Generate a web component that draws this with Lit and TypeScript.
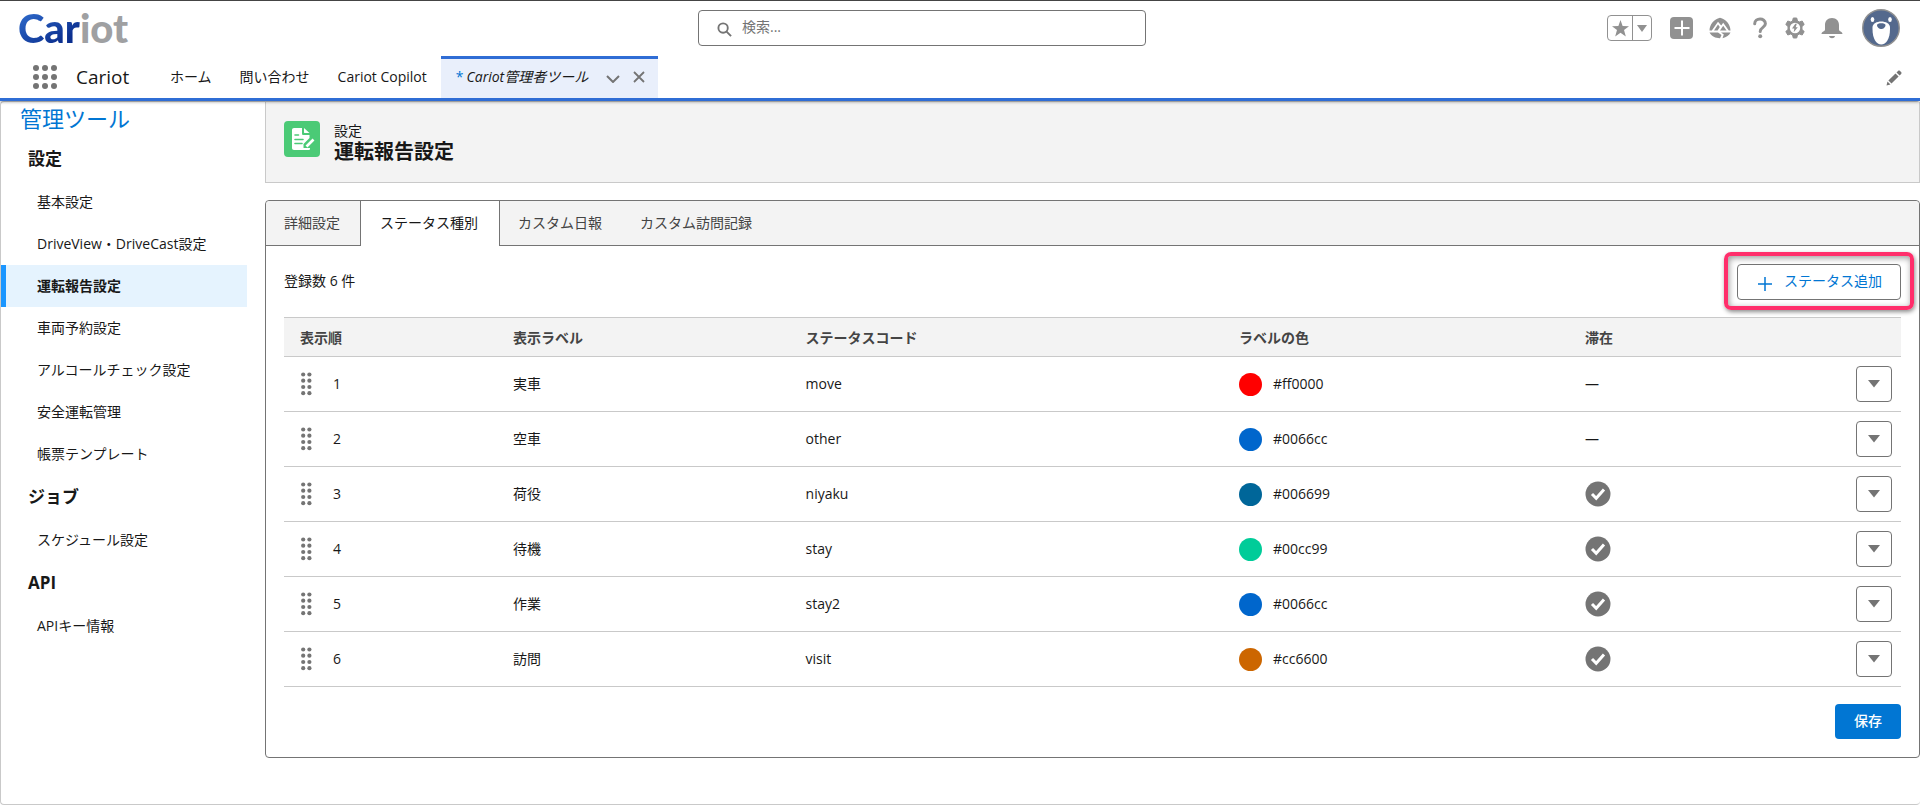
import { LitElement, html, css, svg } from "lit";
import { customElement, state } from "lit/decorators.js";

interface StatusType {
  label: string;
  code: string;
  color: string;
  stay: boolean;
}

interface MenuGroup {
  title: string;
  items: string[];
}

const STATUSES: StatusType[] = [
  { label: "実車", code: "move", color: "#ff0000", stay: false },
  { label: "空車", code: "other", color: "#0066cc", stay: false },
  { label: "荷役", code: "niyaku", color: "#006699", stay: true },
  { label: "待機", code: "stay", color: "#00cc99", stay: true },
  { label: "作業", code: "stay2", color: "#0066cc", stay: true },
  { label: "訪問", code: "visit", color: "#cc6600", stay: true },
];

const MENU: MenuGroup[] = [
  {
    title: "設定",
    items: [
      "基本設定",
      "DriveView・DriveCast設定",
      "運転報告設定",
      "車両予約設定",
      "アルコールチェック設定",
      "安全運転管理",
      "帳票テンプレート",
    ],
  },
  { title: "ジョブ", items: ["スケジュール設定"] },
  { title: "API", items: ["APIキー情報"] },
];

const TABS = ["詳細設定", "ステータス種別", "カスタム日報", "カスタム訪問記録"];

const base = css`
  * {
    box-sizing: border-box;
  }
  button {
    font: inherit;
    color: inherit;
    background: none;
    border: 0;
    padding: 0;
    cursor: pointer;
  }
  a {
    color: inherit;
    text-decoration: none;
  }
  svg {
    display: block;
    flex: none;
  }
`;

@customElement("global-header")
class GlobalHeader extends LitElement {
  static styles = [
    base,
    css`
      :host {
        display: block;
        position: relative;
        box-shadow: 0 1px 3px rgba(0, 0, 0, 0.35);
      }
      .bar {
        display: grid;
        grid-template-columns: minmax(0, 680fr) 448px minmax(0, 754fr);
        align-items: center;
        height: 55px;
        padding: 0 20px 0 18px;
        border-top: 1px solid #444;
      }
      .logo {
        display: flex;
        font: 900 40px/48px "Lato", sans-serif;
        color: #12409f;
      }
      .logo .light {
        color: #9fa0a2;
      }
      .logo .deep {
        background: linear-gradient(150deg, #2a63c4 20%, #0b2f8f 75%);
        background-clip: text;
        -webkit-background-clip: text;
        color: transparent;
      }
      .search {
        display: flex;
        align-items: center;
        gap: 10px;
        height: 36px;
        padding: 0 18px;
        border: 1px solid #747474;
        border-radius: 4px;
      }
      .search svg {
        margin-top: 3px;
      }
      .search input {
        flex: 1;
        min-width: 0;
        border: 0;
        outline: 0;
        padding: 0 0 2px;
        background: none;
        font: inherit;
        color: #444;
      }
      .search input::placeholder {
        color: #747474;
        opacity: 1;
      }
      .tools {
        display: flex;
        justify-content: flex-end;
        align-items: center;
      }
      .tools button {
        display: flex;
      }
      .fav {
        display: flex;
        height: 26px;
        border: 1px solid #919191;
        border-radius: 4px;
        margin-right: 18px;
      }
      .fav button {
        align-items: center;
        justify-content: center;
        width: 18px;
      }
      .fav .star {
        width: 25px;
        border-right: 1px solid #919191;
      }
      .icons {
        display: flex;
        align-items: center;
        gap: 16px;
        margin-right: 19px;
      }
      .icons .help {
        margin: 0 2px 0 6px;
      }
      .nav {
        display: flex;
        align-items: stretch;
        height: 46px;
        padding-right: 18px;
        border-bottom: 3px solid #2f6dd5;
      }
      .launcher {
        display: flex;
        align-items: center;
        padding: 0 19px 0 33px;
      }
      .app {
        align-self: center;
        width: 94px;
        font-size: 19px;
      }
      .links {
        display: flex;
        align-items: center;
        gap: 28px;
        margin-right: 14px;
      }
      .current {
        display: flex;
        align-items: center;
        gap: 3px;
        margin-top: 1px;
        padding: 0 13px 3px 15px;
        background: #e9effb;
        border-top: 3px solid #2f6dd5;
      }
      .current a {
        font-style: italic;
      }
      .mark {
        color: #0176d3;
      }
      .caret {
        margin: 4px 10px 0 15px;
      }
      .edit {
        margin: 2px 0 0 auto;
      }
    `,
  ];

  render() {
    return html`
      <header>
        <div class="bar">
          <div class="logo"><span class="deep">Car</span><span class="light">iot</span></div>
          <label class="search">
            <svg width="15" height="15" viewBox="0 0 16 16" fill="none" stroke="#747474" stroke-width="2">
              <circle cx="6.5" cy="6.5" r="5" />
              <path d="M10.2 10.2L15 15" />
            </svg>
            <input type="search" placeholder="検索..." aria-label="検索" />
          </label>
          <div class="tools">
            <div class="fav">
              <button class="star" aria-label="お気に入り">
                <svg width="17" height="17" viewBox="0 0 16 16" fill="#919191">
                  <path d="M8 0L10 5.6L16 5.8L11.3 9.5L13 15.6L8 12L3 15.6L4.7 9.5L0 5.8L6 5.6Z" />
                </svg>
              </button>
              <button aria-label="お気に入りリスト">
                <svg width="10" height="7" viewBox="0 0 10 7" fill="#919191"><path d="M0 0H10L5 7Z" /></svg>
              </button>
            </div>
            <div class="icons">
              <button aria-label="作成">
                <svg width="23" height="22" viewBox="0 0 23 22">
                  <rect width="23" height="22" rx="4" fill="#919191" />
                  <path d="M12 3.5V18.5M4.5 11H19.5" stroke="#fff" stroke-width="2" />
                </svg>
              </button>
              <button aria-label="ガイダンスセンター">
                <svg width="22" height="22" viewBox="0 0 22 22" fill="#919191">
                  <path d="M0.5 13.5C0.8 7 5 2.5 11 0.8C17 2.5 21.2 7 21.5 13.5H19.8L14.2 5.8L12.2 8.5L9 4.8L2.8 13.5Z" />
                  <path d="M5 13.5L9 7.5L10.8 10L8.6 13.5ZM11 13.5L14.2 8.7L17.5 13.5Z" />
                  <path d="M0.5 15.5H9L12.5 18L11 21.2C7 21.3 2.5 19.5 0.5 15.5ZM12 15.5H21.5C20.2 18.3 17.5 20.3 13.5 21.2L14.8 17.5Z" />
                </svg>
              </button>
              <button class="help" aria-label="ヘルプ">
                <svg width="14" height="22" viewBox="5.3 0 14 22">
                  <path d="M7 6.8C7 0.6 17.7 0.5 17.7 6.8C17.7 10.5 12.5 10.3 12.5 14.5" fill="none" stroke="#919191" stroke-width="3" stroke-linecap="round" />
                  <circle cx="12.5" cy="19.3" r="2" fill="#919191" />
                </svg>
              </button>
              <button aria-label="設定">
                <svg width="20" height="22" viewBox="0 0 20 22">
                  <path d="M8.3 1H11.7L12.5 4L14.3 5L17.2 4L19.2 7.5L17 9.5V12.5L19.2 14.5L17.2 18L14.3 17L12.5 18L11.7 21H8.3L7.5 18L5.7 17L2.8 18L0.8 14.5L3 12.5V9.5L0.8 7.5L2.8 4L5.7 5L7.5 4Z" fill="#919191" stroke="#919191" stroke-linejoin="round" />
                  <circle cx="10" cy="11" r="5.2" fill="#fff" />
                  <path d="M10.3 6.8L7 11.5H9.3L8.7 15.2L12.8 10.2H10.7L11.8 6.8Z" fill="#919191" />
                </svg>
              </button>
              <button aria-label="通知">
                <svg width="22" height="22" viewBox="0 0 22 22" fill="#919191">
                  <path d="M11 1C15.5 1 18 4 18 8V12.5C18 14.5 21.5 14.5 21.5 17H0.5C0.5 14.5 4 14.5 4 12.5V8C4 4 6.5 1 11 1Z" />
                  <path d="M8 19H14C13.5 22 8.5 22 8 19Z" />
                </svg>
              </button>
            </div>
            <button aria-label="プロファイル">
              <svg width="38" height="38" viewBox="0 0 38 38">
                <circle cx="19" cy="19" r="18.3" fill="#54698d" stroke="#919191" stroke-width="1.4" />
                <ellipse cx="10.5" cy="10.5" rx="1.8" ry="2.5" fill="#fff" />
                <ellipse cx="28" cy="10.5" rx="1.8" ry="2.5" fill="#fff" />
                <path d="M10.5 18.5C10.5 10.5 28 10.5 28 18.5V20C28 30 24 35.5 19.25 35.5C14.5 35.5 10.5 30 10.5 20Z" fill="#fff" />
                <path d="M15 16C15 13.5 23.5 13.5 23.5 16C23.5 18.5 21 20 19.25 20C17.5 20 15 18.5 15 16Z" fill="#54698d" />
              </svg>
            </button>
          </div>
        </div>
        <nav class="nav">
          <button class="launcher" aria-label="アプリケーションランチャー">
            <svg width="24" height="24" viewBox="0 0 24 24" fill="#747474">
              ${[3, 12, 21].map((y) => [3, 12, 21].map((x) => svg`<circle cx=${x} cy=${y} r="3"/>`))}
            </svg>
          </button>
          <span class="app">Cariot</span>
          <div class="links">
            <a href="#">ホーム</a>
            <a href="#">問い合わせ</a>
            <a href="#">Cariot Copilot</a>
          </div>
          <div class="current">
            <span class="mark">*</span>
            <a href="#">Cariot管理者ツール</a>
            <button class="caret" aria-label="タブメニュー">
              <svg width="14" height="8" viewBox="0 0 14 8" fill="none" stroke="#747474" stroke-width="2">
                <path d="M1 1L7 7L13 1" />
              </svg>
            </button>
            <button aria-label="タブを閉じる">
              <svg width="12" height="12" viewBox="0 0 12 12" fill="none" stroke="#747474" stroke-width="1.8">
                <path d="M1 1L11 11M11 1L1 11" />
              </svg>
            </button>
          </div>
          <button class="edit" aria-label="編集">
            <svg width="16" height="16" viewBox="0 0 16 16" fill="#747474">
              <path d="M0.5 15.5L1.5 11.5L4.5 14.5ZM2.4 10.5L9.5 3.4L12.6 6.5L5.5 13.6ZM10.5 2.4L12 0.9C12.6 0.3 13.4 0.3 14 0.9L15.1 2C15.7 2.6 15.7 3.4 15.1 4L13.6 5.5Z" />
            </svg>
          </button>
        </nav>
      </header>
    `;
  }
}

@customElement("side-menu")
class SideMenu extends LitElement {
  @state() private selected = "運転報告設定";

  static styles = [
    base,
    css`
      :host {
        display: block;
      }
      .title {
        margin: 0;
        padding: 0 0 2px 19px;
        font-size: 22px;
        font-weight: 400;
        line-height: 33px;
        color: #0176d3;
      }
      .group {
        margin: 0;
        padding-left: 27px;
        font-size: 17px;
        font-weight: 700;
        line-height: 44px;
      }
      .list {
        list-style: none;
        margin: 0;
        padding: 0;
      }
      .item {
        display: block;
        padding-left: 31px;
        border-left: 5px solid transparent;
        line-height: 42px;
      }
      .item.on {
        font-weight: 700;
        background: #e5f3fe;
        border-left-color: #1b96ff;
      }
    `,
  ];

  render() {
    return html`
      <nav>
        <h2 class="title">管理ツール</h2>
        ${MENU.map(
          (g) => html`
            <h3 class="group">${g.title}</h3>
            <ul class="list">
              ${g.items.map(
                (i) => html`<li>
                  <a href="#" class="item ${i === this.selected ? "on" : ""}" @click=${() => (this.selected = i)}>${i}</a>
                </li>`
              )}
            </ul>
          `
        )}
      </nav>
    `;
  }
}

@customElement("status-panel")
class StatusPanel extends LitElement {
  @state() private tab = 1;

  static styles = [
    base,
    css`
      :host {
        display: block;
        border: 1px solid #747474;
        border-radius: 4px;
        background: #fff;
      }
      .tabs {
        display: flex;
        height: 45px;
        background: #f3f3f3;
        border-bottom: 1px solid #747474;
        border-radius: 4px 4px 0 0;
      }
      .tab {
        padding: 0 20px 0 18px;
        color: #444;
      }
      .tab.on {
        height: 45px;
        padding: 0 21px 1px 19px;
        background: #fff;
        color: #181818;
        border: 1px solid #747474;
        border-width: 0 1px;
      }
      .body {
        padding: 18px;
      }
      .head {
        display: flex;
        align-items: center;
        justify-content: space-between;
        margin-bottom: 17px;
      }
      .count,
      .add span {
        padding-bottom: 2px;
      }
      .add {
        position: relative;
        display: flex;
        align-items: center;
        gap: 12px;
        height: 36px;
        padding: 0 18px 0 20px;
        border: 1px solid #747474;
        border-radius: 4px;
        color: #0176d3;
      }
      .add svg {
        margin-top: 3px;
      }
      .callout {
        position: absolute;
        inset: -13px -14px -11px -14px;
        border: 4px solid #ff2e6b;
        border-radius: 7px;
        box-shadow: 1px 2px 4px rgba(0, 0, 0, 0.45), inset 1px 2px 6px rgba(0, 0, 0, 0.4);
        pointer-events: none;
      }
      table {
        width: 100%;
        table-layout: fixed;
        border-collapse: collapse;
      }
      th {
        height: 39px;
        padding: 2px 9px 0;
        text-align: left;
        font-weight: 700;
        color: #444;
        background: #f3f3f3;
        border-top: 1px solid #c9c9c9;
        border-bottom: 1px solid #c9c9c9;
      }
      td {
        height: 55px;
        padding: 0 9px;
        border-bottom: 1px solid #c9c9c9;
      }
      th:first-child,
      td:first-child {
        padding-left: 16px;
      }
      .c1 {
        width: 13.6%;
      }
      .c2 {
        width: 18.1%;
      }
      .c3 {
        width: 26.8%;
      }
      .c4 {
        width: 21.4%;
      }
      .order,
      .color {
        display: flex;
        align-items: center;
      }
      .order {
        gap: 21px;
      }
      .color {
        gap: 11px;
      }
      .dot {
        width: 23px;
        height: 23px;
        border-radius: 50%;
      }
      .more {
        display: flex;
        align-items: center;
        justify-content: center;
        width: 36px;
        height: 36px;
        margin-left: auto;
        border: 1px solid #747474;
        border-radius: 4px;
      }
      .foot {
        display: flex;
        justify-content: flex-end;
        padding-top: 17px;
      }
      .save {
        height: 35px;
        padding: 0 19px 2px;
        border-radius: 4px;
        background: #0176d3;
        color: #fff;
        font-weight: 500;
      }
    `,
  ];

  private row(s: StatusType, i: number) {
    return html`<tr>
      <td>
        <div class="order">
          <svg width="12" height="24" viewBox="0 0 12 24" fill="#747474">
            ${[2.5, 8.7, 15, 21.2].map((y) => [3.2, 9.4].map((x) => svg`<circle cx=${x} cy=${y} r="2.1"/>`))}
          </svg>
          <span>${i + 1}</span>
        </div>
      </td>
      <td>${s.label}</td>
      <td>${s.code}</td>
      <td>
        <div class="color"><span class="dot" style="background:${s.color}"></span>${s.color}</div>
      </td>
      <td>
        ${s.stay
          ? html`<svg width="26" height="26" viewBox="0 0 26 26" role="img" aria-label="滞在">
              <circle cx="13" cy="13" r="12.5" fill="#747474" />
              <path d="M7 13L11.2 17.2L19 8.5" fill="none" stroke="#fff" stroke-width="3" />
            </svg>`
          : "—"}
      </td>
      <td>
        <button class="more" aria-label="操作">
          <svg width="12" height="8" viewBox="0 0 12 8"><path d="M0 0H12L6 7.5Z" fill="#747474" /></svg>
        </button>
      </td>
    </tr>`;
  }

  render() {
    return html`
      <div class="tabs" role="tablist">
        ${TABS.map(
          (t, i) => html`<button
            role="tab"
            class="tab ${i === this.tab ? "on" : ""}"
            aria-selected=${i === this.tab}
            @click=${() => (this.tab = i)}
          >
            ${t}
          </button>`
        )}
      </div>
      <div class="body">
        <div class="head">
          <span class="count">登録数 ${STATUSES.length} 件</span>
          <button class="add">
            <svg width="14" height="14" viewBox="0 0 14 14" stroke="#0176d3" stroke-width="1.5">
              <path d="M7 0V14M0 7H14" />
            </svg>
            <span>ステータス追加</span>
            <i class="callout"></i>
          </button>
        </div>
        <table>
          <thead>
            <tr>
              <th class="c1">表示順</th>
              <th class="c2">表示ラベル</th>
              <th class="c3">ステータスコード</th>
              <th class="c4">ラベルの色</th>
              <th>滞在</th>
              <th></th>
            </tr>
          </thead>
          <tbody>
            ${STATUSES.map((s, i) => this.row(s, i))}
          </tbody>
        </table>
        <div class="foot"><button class="save">保存</button></div>
      </div>
    `;
  }
}

@customElement("app-root")
class AppRoot extends LitElement {
  static styles = [
    base,
    css`
      :host {
        display: flex;
        flex-direction: column;
        min-height: 100vh;
        background: #fff;
        color: #181818;
        font: 14px/20px "Open Sans", "Noto Sans CJK JP", sans-serif;
      }
      .page {
        flex: 1;
        display: grid;
        grid-template-columns: 246px minmax(0, 1fr);
        column-gap: 18px;
        align-items: start;
        border: 1px solid #c9c9c9;
        border-radius: 4px;
        border-right: 0;
      }
      .heading {
        display: flex;
        gap: 14px;
        height: 81px;
        padding: 19px 18px 0;
        margin-bottom: 17px;
        background: #f3f3f3;
        border: 1px solid #c9c9c9;
        border-top: 0;
      }
      .heading p,
      .heading h1 {
        margin: 0;
      }
      .heading h1 {
        font-size: 20px;
        line-height: 22px;
      }
    `,
  ];

  render() {
    return html`
      <global-header></global-header>
      <main class="page">
        <side-menu></side-menu>
        <section>
          <div class="heading">
            <svg width="36" height="36" viewBox="0 0 36 36">
              <rect width="36" height="36" rx="4" fill="#4bca76" />
              <path d="M10 7H18V12.5C18 13.5 18.5 14 19.5 14H25.5V17L19.5 23V27H26V27.5C26 28.5 25.5 29 24.5 29H10C8.8 29 8 28.3 8 27V9C8 7.8 8.8 7 10 7Z" fill="#fff" />
              <path d="M20 7L25.5 12H20.5C20.2 12 20 11.8 20 11.5Z" fill="#fff" />
              <path d="M11 14H14.5M11 18.5H19M11 22.5H18" stroke="#4bca76" stroke-width="1.6" stroke-linecap="round" />
              <path d="M22.5 25.5L29.5 18.5" stroke="#fff" stroke-width="2.6" />
            </svg>
            <div>
              <p>設定</p>
              <h1>運転報告設定</h1>
            </div>
          </div>
          <status-panel></status-panel>
        </section>
      </main>
    `;
  }
}
